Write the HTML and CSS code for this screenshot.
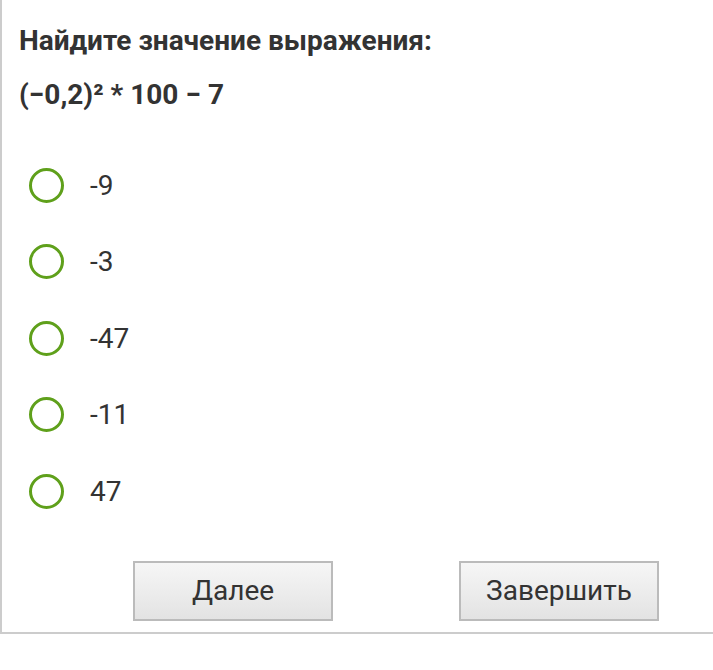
FILE: index.html
```html
<!DOCTYPE html>
<html lang="ru">
<head>
  <meta charset="UTF-8">
  <meta name="viewport" content="width=device-width, initial-scale=1.0">
  <title>Тест</title>
  <link rel="stylesheet" href="styles.css">
</head>
<body>
  <div class="quiz-card">
    <h2 class="question-title">Найдите значение выражения:</h2>
    <p class="question-expr">(−0,2)² * 100 − 7</p>

    <ul class="answer-list">
      <li class="answer"><span class="radio"></span><span class="answer-text">-9</span></li>
      <li class="answer"><span class="radio"></span><span class="answer-text">-3</span></li>
      <li class="answer"><span class="radio"></span><span class="answer-text">-47</span></li>
      <li class="answer"><span class="radio"></span><span class="answer-text">-11</span></li>
      <li class="answer"><span class="radio"></span><span class="answer-text">47</span></li>
    </ul>

    <div class="button-group">
      <button type="button">Далее</button>
      <button type="button">Завершить</button>
    </div>
  </div>
</body>
</html>
```

FILE: styles.css
```css
* {
  margin: 0;
  padding: 0;
  box-sizing: border-box;
  font-family: Roboto, 'Noto Sans', sans-serif;
}

body {
  background: #fff;
  color: #333;
  overflow: hidden;
}

.quiz-card {
  width: 100%;
  background: #fff;
  border-left: 2px solid #cccccc;
  border-bottom: 2px solid #cccccc;
  padding: 24px 0 11px 17px;
  box-shadow: 0 10px 18px rgba(0, 0, 0, 0.2);
}

.question-title {
  font-size: 28px;
  font-weight: 700;
  line-height: 33px;
  color: #333;
}

.question-expr {
  font-size: 28px;
  font-weight: 700;
  line-height: 33px;
  margin-top: 21px;
  color: #333;
}

.answer-list {
  list-style: none;
  margin-top: 36px;
}

.answer {
  display: flex;
  align-items: center;
  height: 76.5px;
}

.radio {
  width: 35px;
  height: 35px;
  margin-left: 10px;
  border: 3.5px solid #5fa01b;
  border-radius: 50%;
}

.answer-text {
  margin-left: 26px;
  font-size: 28px;
  color: #333;
}

.button-group {
  display: flex;
  gap: 126px;
  margin-top: 31px;
  padding-left: 114px;
}

button {
  width: 200px;
  height: 60px;
  border: 2px solid #bbbbbb;
  background: linear-gradient(#f6f6f6, #e3e3e3);
  color: #333;
  font-size: 28px;
}
```
